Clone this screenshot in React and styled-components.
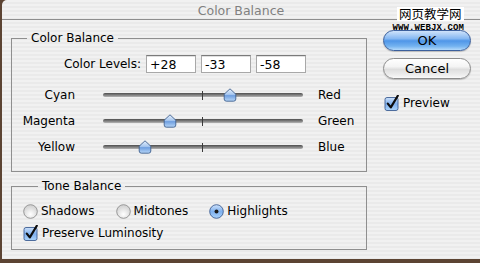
import React from "react";
import styled, { createGlobalStyle } from "styled-components";

const GlobalStyle = createGlobalStyle`
  html, body {
    margin: 0;
    padding: 0;
    width: 480px;
    height: 263px;
    overflow: hidden;
    background: #5c4433;
  }
  * {
    box-sizing: border-box;
  }
`;

const FONT = `"DejaVu Sans", "Noto Sans", sans-serif`;

const Window = styled.div`
  position: relative;
  margin-left: 2px;
  width: 478px;
  height: 259px;
  border-top-left-radius: 5px;
  overflow: hidden;
  font-family: ${FONT};
  font-size: 12px;
  color: #000;
  background: repeating-linear-gradient(
    to bottom,
    #f1f1f1 0px,
    #f1f1f1 2px,
    #eaeaea 2px,
    #eaeaea 4px
  );
`;

const TitleBar = styled.div`
  height: 20px;
  border-bottom: 1px solid #8e8e8e;
  display: flex;
  align-items: center;
  justify-content: center;
  font-size: 12.5px;
  color: #808080;
  padding-top: 1px;
`;

const Body = styled.div`
  display: flex;
  padding: 11px 0 0 9px;
`;

const LeftColumn = styled.div`
  width: 356px;
  display: flex;
  flex-direction: column;
`;

const Group = styled.fieldset`
  margin: ${p => p.$top || 0}px 0 0 0;
  padding: ${p => p.$pad};
  border: 1px solid #8f8f8f;
  min-width: 0;
`;

const Legend = styled.legend`
  margin-left: 15px;
  padding: 0 4px;
  line-height: 14px;
  font-size: 12px;
`;

const LevelsRow = styled.div`
  display: flex;
  align-items: center;
  height: 18px;
`;

const LevelsLabel = styled.div`
  width: 134px;
  text-align: right;
  padding-right: 5px;
`;

const LevelInput = styled.div`
  width: 50px;
  height: 18px;
  margin-right: 5px;
  background: #fff;
  border: 1px solid #a8a8a8;
  border-top-color: #7a7a7a;
  box-shadow: inset 0 1px 0 #e0e0e0;
  padding: 1px 0 0 3px;
  font-size: 12.5px;
  line-height: 15px;
`;

const SliderList = styled.div`
  margin-top: 9px;
  display: grid;
  grid-template-columns: 63px 228px auto;
  grid-auto-rows: 26px;
`;

const SideLabel = styled.div`
  display: flex;
  align-items: center;
  justify-content: ${p => (p.$right ? "flex-start" : "flex-end")};
  padding-left: ${p => (p.$right ? "15px" : "0")};
`;

const TrackWrap = styled.div`
  position: relative;
  margin-left: 28px;
  width: 200px;
`;

const Track = styled.div`
  position: absolute;
  left: 0;
  right: 0;
  top: 11px;
  height: 4px;
  border-radius: 2px;
  background: linear-gradient(to bottom, #4e4e4e, #888 60%, #b5b5b5);
`;

const Tick = styled.div`
  position: absolute;
  left: 99px;
  top: 9px;
  width: 1px;
  height: 9px;
  background: #3a3a3a;
`;

const ThumbBox = styled.svg`
  position: absolute;
  top: 6px;
  width: 14px;
  height: 14px;
`;

const RightColumn = styled.div`
  margin-left: 16px;
  margin-top: -1px;
  display: flex;
  flex-direction: column;
  width: 88px;
`;

const Button = styled.div`
  height: 21px;
  border-radius: 11px;
  display: flex;
  align-items: center;
  justify-content: center;
  font-size: 13px;
  margin-bottom: 7px;
  border: 1px solid ${p => (p.$primary ? "#3b5f9c" : "#8c8c8c")};
  background: ${p =>
    p.$primary
      ? "linear-gradient(to bottom, #cfe3fb 0%, #86b8f2 40%, #4f96e8 52%, #74b3f0 80%, #b4dafb 100%)"
      : "linear-gradient(to bottom, #ffffff 0%, #f4f4f4 40%, #dedede 55%, #eeeeee 85%, #fafafa 100%)"};
  box-shadow: 0 1px 1px rgba(0, 0, 0, 0.2);
`;

const CheckRow = styled.div`
  display: flex;
  align-items: center;
  gap: 3px;
  height: 18px;
  margin: ${p => p.$margin || "0"};
`;

const ToneRow = styled.div`
  display: flex;
  align-items: center;
  height: 18px;
`;

const RadioItem = styled.div`
  display: flex;
  align-items: center;
  gap: 3px;
  margin-right: 21px;
`;

const Watermark = styled.div`
  position: absolute;
  top: 7px;
  right: 16px;
  display: flex;
  flex-direction: column;
  align-items: center;
`;

const WatermarkCn = styled.div`
  font-family: "Noto Sans CJK SC", sans-serif;
  font-size: 12.5px;
  line-height: 14px;
  color: #000;
  background: #fff;
  padding: 0 2px;
  margin-right: -4px;
`;

const WatermarkUrl = styled.div`
  font-family: "Liberation Mono", monospace;
  font-weight: bold;
  font-size: 9px;
  line-height: 8px;
  letter-spacing: 0.1px;
  color: #000;
  margin-top: 3px;
`;

function Thumb({ value }) {
  const x = 99.5 + (value / 100) * 99.5 - 7;
  return (
    <ThumbBox viewBox="0 0 14 14" style={{ left: x }}>
      <defs>
        <linearGradient id="thumbGrad" x1="0" y1="0" x2="0" y2="1">
          <stop offset="0" stopColor="#e6f0fc" />
          <stop offset="0.45" stopColor="#a9c8ef" />
          <stop offset="0.55" stopColor="#6f9fe0" />
          <stop offset="1" stopColor="#b7d6f7" />
        </linearGradient>
      </defs>
      <path
        d="M7 0.8 L12.8 6.2 L12.8 11 Q12.8 13.2 10.6 13.2 L3.4 13.2 Q1.2 13.2 1.2 11 L1.2 6.2 Z"
        fill="url(#thumbGrad)"
        stroke="#41618f"
        strokeWidth="0.9"
      />
    </ThumbBox>
  );
}

function Radio({ checked }) {
  return (
    <svg width="15" height="15" viewBox="0 0 15 15">
      <defs>
        <radialGradient id="radioOff" cx="0.5" cy="0.7" r="0.6">
          <stop offset="0" stopColor="#ffffff" />
          <stop offset="1" stopColor="#d4d4d4" />
        </radialGradient>
        <linearGradient id="radioOn" x1="0" y1="0" x2="0" y2="1">
          <stop offset="0" stopColor="#cfe2fa" />
          <stop offset="0.5" stopColor="#7fb1ef" />
          <stop offset="1" stopColor="#a9d2fa" />
        </linearGradient>
      </defs>
      <circle
        cx="7.5"
        cy="7.5"
        r="6.8"
        fill={checked ? "url(#radioOn)" : "url(#radioOff)"}
        stroke={checked ? "#3e5f93" : "#8e8e8e"}
        strokeWidth="0.9"
      />
      {checked && <circle cx="7.5" cy="7.5" r="2" fill="#1a1a1a" />}
    </svg>
  );
}

function Checkbox() {
  return (
    <svg width="16" height="16" viewBox="0 0 16 16">
      <defs>
        <linearGradient id="checkGrad" x1="0" y1="0" x2="0" y2="1">
          <stop offset="0" stopColor="#cde1fa" />
          <stop offset="0.5" stopColor="#7fb0ee" />
          <stop offset="1" stopColor="#acd4fa" />
        </linearGradient>
      </defs>
      <rect x="1" y="2.5" width="13" height="13" rx="2" fill="url(#checkGrad)" stroke="#3e5f93" strokeWidth="0.9" />
      <path d="M3.8 8.6 L6.8 12.4 L13.8 0.8" fill="none" stroke="#0d0d0d" strokeWidth="2.2" strokeLinecap="round" strokeLinejoin="round" />
    </svg>
  );
}

const sliders = [
  { left: "Cyan", right: "Red", value: 28 },
  { left: "Magenta", right: "Green", value: -33 },
  { left: "Yellow", right: "Blue", value: -58 }
];

const tones = [
  { label: "Shadows", checked: false },
  { label: "Midtones", checked: false },
  { label: "Highlights", checked: true }
];

export default function App() {
  return (
    <>
      <GlobalStyle />
      <Window>
        <TitleBar>Color Balance</TitleBar>
        <Body>
          <LeftColumn>
            <Group $pad="10px 0 11px 0">
              <Legend>Color Balance</Legend>
              <LevelsRow>
                <LevelsLabel>Color Levels:</LevelsLabel>
                {sliders.map(s => (
                  <LevelInput key={s.left}>{s.value > 0 ? `+${s.value}` : s.value}</LevelInput>
                ))}
              </LevelsRow>
              <SliderList>
                {sliders.map(s => (
                  <React.Fragment key={s.left}>
                    <SideLabel>{s.left}</SideLabel>
                    <TrackWrap>
                      <Track />
                      <Tick />
                      <Thumb value={s.value} />
                    </TrackWrap>
                    <SideLabel $right>{s.right}</SideLabel>
                  </React.Fragment>
                ))}
              </SliderList>
            </Group>
            <Group $top={7} $pad="9px 0 7px 11px">
              <Legend>Tone Balance</Legend>
              <ToneRow>
                {tones.map(t => (
                  <RadioItem key={t.label}>
                    <Radio checked={t.checked} />
                    {t.label}
                  </RadioItem>
                ))}
              </ToneRow>
              <CheckRow $margin="4px 0 0 0">
                <Checkbox />
                Preserve Luminosity
              </CheckRow>
            </Group>
          </LeftColumn>
          <RightColumn>
            <Button $primary>OK</Button>
            <Button>Cancel</Button>
            <CheckRow $margin="8px 0 0 1px">
              <Checkbox />
              Preview
            </CheckRow>
          </RightColumn>
        </Body>
        <Watermark>
          <WatermarkCn>网页教学网</WatermarkCn>
          <WatermarkUrl>WWW.WEBJX.COM</WatermarkUrl>
        </Watermark>
      </Window>
    </>
  );
}
